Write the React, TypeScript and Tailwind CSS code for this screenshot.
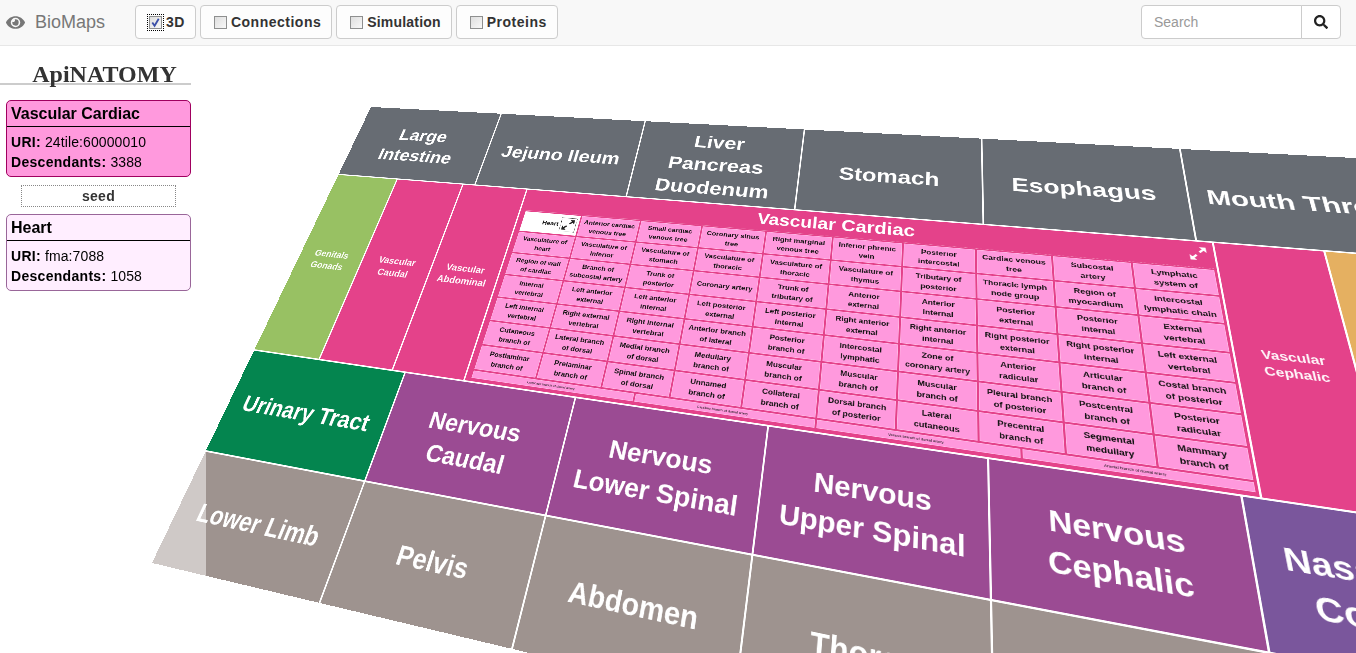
import React from "react";
import { FaEye, FaSearch } from "react-icons/fa";

type Pt = [number, number];

// flat size of the treemap plane, the corners say where it lands on screen
const W = 1650;
const H = 1000;
const TL: Pt = [371, 107];
const TR: Pt = [1181, 149];
const BR: Pt = [1304, 838];
const BL: Pt = [152, 563];

function planeMatrix() {
  const dx1 = TR[0] - BR[0];
  const dy1 = TR[1] - BR[1];
  const dx2 = BL[0] - BR[0];
  const dy2 = BL[1] - BR[1];
  const sx = TL[0] - TR[0] + BR[0] - BL[0];
  const sy = TL[1] - TR[1] + BR[1] - BL[1];
  const den = dx1 * dy2 - dx2 * dy1;
  const g = (sx * dy2 - dx2 * sy) / den;
  const h = (dx1 * sy - sx * dy1) / den;
  const a = TR[0] - TL[0] + g * TR[0];
  const b = BL[0] - TL[0] + h * BL[0];
  const d = TR[1] - TL[1] + g * TR[1];
  const e = BL[1] - TL[1] + h * BL[1];
  const m = [a / W, d / W, 0, g / W, b / H, e / H, 0, h / H, 0, 0, 1, 0, TL[0], TL[1], 0, 1];
  return `matrix3d(${m.join(",")})`;
}

const rowA = ["Large\nIntestine", "Jejuno Ileum", "Liver\nPancreas\nDuodenum", "Stomach", "Esophagus", "Mouth Throat", "Teeth"];
const rowC: [string, string][] = [
  ["Urinary Tract", "bg-[#04854f] pt-[4px]"],
  ["Nervous\nCaudal", "bg-[#9b4b93] pt-[10px]"],
  ["Nervous\nLower Spinal", "bg-[#9b4b93] pt-[10px]"],
  ["Nervous\nUpper Spinal", "bg-[#9b4b93] pt-[10px]"],
  ["Nervous\nCephalic", "bg-[#9b4b93] pt-[10px]"],
  ["Nasal Cavity\nColliculus", "bg-[#7a569c] pt-[10px]"],
  ["", "bg-[#7a569c]"],
  ["", "bg-[#7a569c]"],
];
const rowD = ["Lower Limb", "Pelvis", "Abdomen", "Thorax", "Neck", "Head", "", ""];

const tiles = [
  ["Heart", "Anterior cardiac\nvenous tree", "Small cardiac\nvenous tree", "Coronary sinus\ntree", "Right marginal\nvenous tree", "Inferior phrenic\nvein", "Posterior\nintercostal", "Cardiac venous\ntree", "Subcostal\nartery", "Lymphatic\nsystem of"],
  ["Vasculature of\nheart", "Vasculature of\ninferior", "Vasculature of\nstomach", "Vasculature of\nthoracic", "Vasculature of\nthoracic", "Vasculature of\nthymus", "Tributary of\nposterior", "Thoracic lymph\nnode group", "Region of\nmyocardium", "Intercostal\nlymphatic chain"],
  ["Region of wall\nof cardiac", "Branch of\nsubcostal artery", "Trunk of\nposterior", "Coronary artery", "Trunk of\ntributary of", "Anterior\nexternal", "Anterior\ninternal", "Posterior\nexternal", "Posterior\ninternal", "External\nvertebral"],
  ["Internal\nvertebral", "Left anterior\nexternal", "Left anterior\ninternal", "Left posterior\nexternal", "Left posterior\ninternal", "Right anterior\nexternal", "Right anterior\ninternal", "Right posterior\nexternal", "Right posterior\ninternal", "Left external\nvertebral"],
  ["Left internal\nvertebral", "Right external\nvertebral", "Right internal\nvertebral", "Anterior branch\nof lateral", "Posterior\nbranch of", "Intercostal\nlymphatic", "Zone of\ncoronary artery", "Anterior\nradicular", "Articular\nbranch of", "Costal branch\nof posterior"],
  ["Cutaneous\nbranch of", "Lateral branch\nof dorsal", "Medial branch\nof dorsal", "Medullary\nbranch of", "Muscular\nbranch of", "Muscular\nbranch of", "Muscular\nbranch of", "Pleural branch\nof posterior", "Postcentral\nbranch of", "Posterior\nradicular"],
  ["Postlaminar\nbranch of", "Prelaminar\nbranch of", "Spinal branch\nof dorsal", "Unnamed\nbranch of", "Collateral\nbranch of", "Dorsal branch\nof posterior", "Lateral\ncutaneous", "Precentral\nbranch of", "Segmental\nmedullary", "Mammary\nbranch of"],
];
const stripTiles = ["Lymphatic branch of dorsal artery", "Capillary branch of dorsal artery", "Venous branch of dorsal artery", "Arterial branch of dorsal artery"];

function ResizeGlyph({ className }: { className: string }) {
  return (
    <svg viewBox="0 0 24 24" className={className} fill="currentColor">
      <path d="M14 2h8v8l-3-3-4 4-2-2 4-4zM10 22H2v-8l3 3 4-4 2 2-4 4z" />
    </svg>
  );
}

function Cell({ label, className }: { label: string; className: string }) {
  return (
    <div className={`flex items-center justify-center whitespace-pre-line text-center text-[43px] font-bold leading-[56px] text-white ${className}`}>
      {label}
    </div>
  );
}

function SmallCell({ label, className }: { label: string; className: string }) {
  return (
    <div className={`flex shrink-0 items-center justify-center whitespace-pre-line text-center text-[20px] font-bold leading-[27px] text-white/95 ${className}`}>
      {label}
    </div>
  );
}

function Tile({ label }: { label: string }) {
  if (label === "Heart") {
    return (
      <div className="flex items-center justify-end gap-1 border border-white bg-white pr-1 text-[13.5px] font-bold text-[#111]">
        {label}
        <span className="flex h-[32px] w-[32px] items-center justify-center border border-dotted border-black">
          <ResizeGlyph className="h-[28px] w-[28px] text-[#222]" />
        </span>
      </div>
    );
  }
  return (
    <div className="flex items-center justify-center whitespace-pre-line border border-[#ffb8e6] bg-[#ff99dd] text-center text-[13.5px] font-bold leading-[19px] text-[#111]">
      {label}
    </div>
  );
}

function VascularCardiac() {
  return (
    <div className="flex w-[1223px] shrink-0 flex-col bg-[#e4428a] pb-[6px] pl-[11px] pr-[4px]">
      <div className="relative flex h-[50px] shrink-0 items-center justify-center border-b border-dotted border-white/40 text-[35px] font-bold text-white">
        Vascular Cardiac
        <ResizeGlyph className="absolute right-[4px] top-[8px] h-[30px] w-[30px] text-white" />
      </div>
      <div className="mt-[2px] grid min-h-0 flex-1 grid-cols-10 grid-rows-[repeat(7,minmax(0,1fr))_14px] gap-[3px]">
        {tiles.flat().map((t, i) => (
          <Tile key={i} label={t} />
        ))}
        <div className="col-span-10 grid grid-cols-4 gap-[3px]">
          {stripTiles.map((t) => (
            <div key={t} className="flex items-center justify-center border border-[#ffb8e6] bg-[#ff99dd] text-[6px] text-[#111]">
              {t}
            </div>
          ))}
        </div>
      </div>
    </div>
  );
}

function Plane() {
  return (
    <div
      className="absolute left-0 top-0 z-0 flex h-[1000px] w-[2640px] origin-top-left flex-col gap-[3px] font-['Liberation_Sans',sans-serif]"
      style={{ transform: planeMatrix() }}
    >
      <div className="grid h-[191px] shrink-0 grid-cols-[repeat(8,327px)] gap-[3px]">
        {rowA.map((t) => (
          <Cell key={t} label={t} className="bg-[#676c73] pt-[10px]" />
        ))}
      </div>
      <div className="flex h-[415px] shrink-0 gap-[3px]">
        <SmallCell label={"Genitals\nGonads"} className="w-[144px] bg-[#98c163]" />
        <SmallCell label={"Vascular\nCaudal"} className="w-[153px] bg-[#e4428a]" />
        <SmallCell label={"Vascular\nAbdominal"} className="w-[142px] bg-[#e4428a]" />
        <VascularCardiac />
        <SmallCell label={"Vascular\nCephalic"} className="w-[153px] bg-[#e4428a]" />
        <SmallCell label="" className="w-[700px] bg-[#e5b061]" />
      </div>
      <div className="grid h-[195px] shrink-0 grid-cols-[repeat(8,327px)] gap-[3px]">
        {rowC.map(([t, c], i) => (
          <Cell key={i} label={t} className={c} />
        ))}
      </div>
      <div className="grid h-[190px] shrink-0 grid-cols-[repeat(8,327px)] gap-[3px]">
        {rowD.map((t, i) => (
          <Cell key={i} label={t} className="bg-[#9e938f] pt-[6px]" />
        ))}
      </div>
    </div>
  );
}

function Toggle({ label, checked, tight }: { label: string; checked?: boolean; tight?: boolean }) {
  return (
    <label className={`flex h-[34px] items-center gap-[4px] rounded-[4px] border border-[#ccc] bg-[#fdfdfd] pl-[13px] pr-[10px] text-[14px] font-bold text-[#333] ${tight ? "tracking-[0.2px]" : "tracking-[0.5px]"}`}>
      <span
        className={`relative flex h-[13px] w-[13px] shrink-0 items-center justify-center border border-[#8e8f8f] bg-gradient-to-br from-[#dedede] to-[#f8f8f8] ${
          checked ? "outline outline-1 outline-offset-1 outline-dotted outline-black" : ""
        }`}
      >
        {checked && (
          <svg viewBox="0 0 12 12" className="h-[11px] w-[11px] text-[#3b4fa8]" fill="none" stroke="currentColor" strokeWidth="2">
            <path d="M2.5 6l2.5 3.5L9.5 2" />
          </svg>
        )}
      </span>
      {label}
    </label>
  );
}

function InfoCard({ title, uri, count, light }: { title: string; uri: string; count: string; light?: boolean }) {
  return (
    <div className={`h-[77px] rounded-[5px] border ${light ? "border-[#996699] bg-[#ffeeff]" : "border-[#a0005f] bg-[#ff99dd]"} text-black`}>
      <div className="flex h-[26px] items-center border-b border-black px-[4px] text-[16px] font-bold">{title}</div>
      <div className="px-[4px] pt-[5px] text-[14px] leading-[20px] tracking-[0.1px]">
        <div>
          <b className="tracking-[0.3px]">URI:</b> {uri}
        </div>
        <div>
          <b className="tracking-[0.3px]">Descendants:</b> {count}
        </div>
      </div>
    </div>
  );
}

export default function App() {
  return (
    <div className="relative h-screen w-full overflow-hidden bg-white font-['Liberation_Sans',sans-serif]">
      <Plane />
      <nav className="relative z-10 flex h-[46px] items-center border-b border-[#e7e7e7] bg-[#f8f8f8] pb-px">
        <FaEye className="ml-[6px] h-[19px] w-[19px] text-[#777]" />
        <span className="ml-[10px] text-[18px] text-[#777]">BioMaps</span>
        <div className="ml-[30px] flex gap-[4px]">
          <Toggle label="3D" checked />
          <Toggle label="Connections" />
          <Toggle label="Simulation" tight />
          <Toggle label="Proteins" />
        </div>
        <div className="ml-auto mr-[15px] flex h-[34px]">
          <div className="flex w-[161px] items-center rounded-l-[4px] border border-[#ccc] bg-white px-[12px] text-[14px] text-[#999]">Search</div>
          <div className="-ml-px flex w-[40px] items-center justify-center rounded-r-[4px] border border-[#ccc] bg-white">
            <FaSearch className="h-[14px] w-[14px] text-[#222]" />
          </div>
        </div>
      </nav>
      <aside className="relative z-10 h-full w-[206px] bg-white/50 pr-[15px]">
        <h1 className="mt-[14px] h-[25px] border-b-2 border-[#ccc] pl-[18px] text-center font-['Liberation_Serif',serif] text-[24px] font-bold leading-[28px] text-[#333]">
          ApiNATOMY
        </h1>
        <div className="mt-[15px] flex flex-col pl-[6px]">
          <InfoCard title="Vascular Cardiac" uri="24tile:60000010" count="3388" />
          <div className="mx-[15px] mb-[7px] mt-[8px] flex h-[22px] items-center justify-center border border-dotted border-[#888] text-[14px] font-bold tracking-[0.3px] text-[#333]">
            seed
          </div>
          <InfoCard title="Heart" uri="fma:7088" count="1058" light />
        </div>
      </aside>
    </div>
  );
}
